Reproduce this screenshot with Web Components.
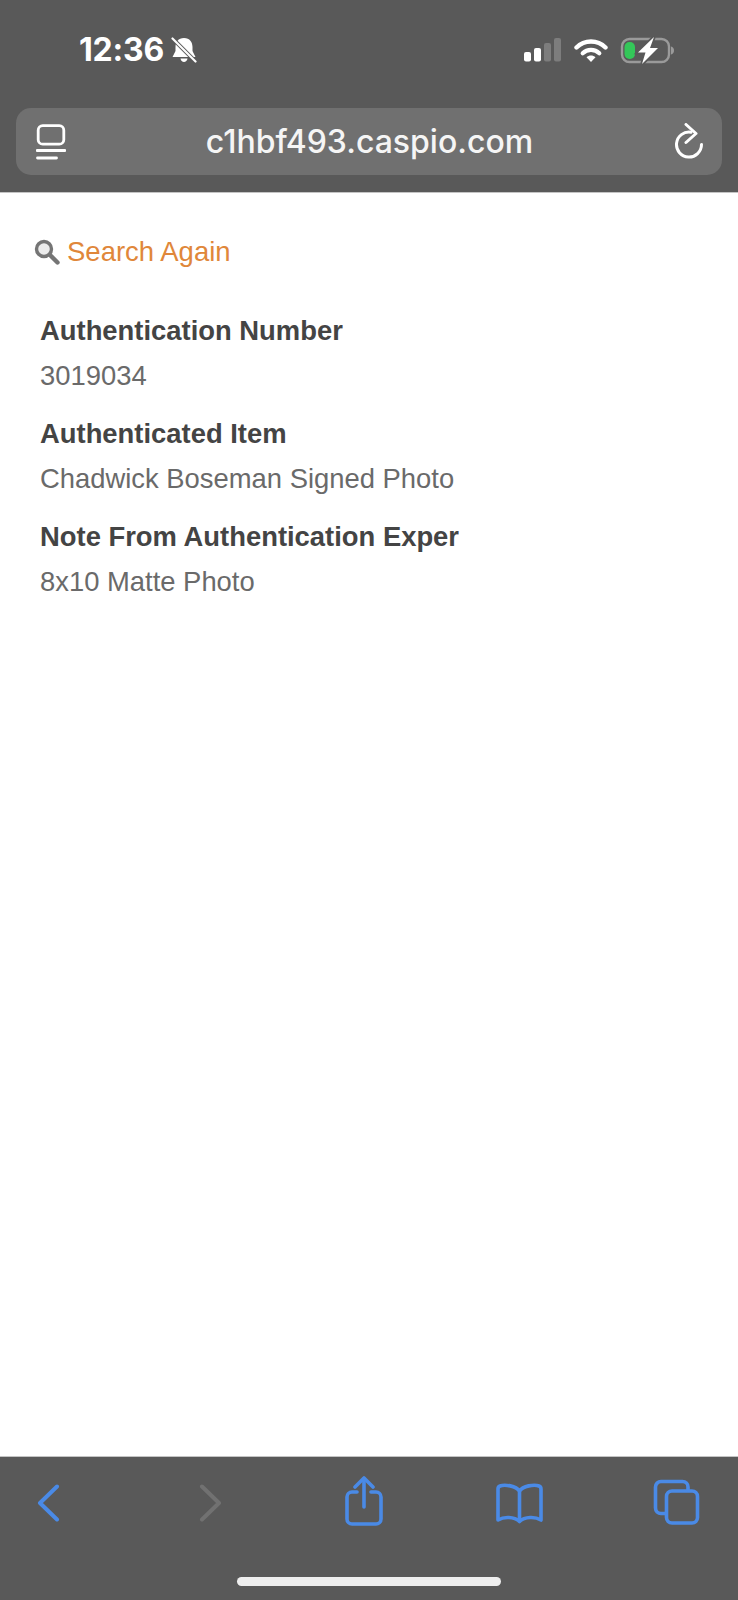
<!DOCTYPE html>
<html lang="en">
<head>
<meta charset="utf-8">
<title>c1hbf493.caspio.com</title>
<style>
    html, body { margin: 0; padding: 0; background: #fff; }
    body { width: 738px; height: 1600px; display: flex; flex-direction: column; overflow: hidden; }
    result-page { flex: 1; }
</style>
</head>
<body>
<safari-header url="c1hbf493.caspio.com" time="12:36"></safari-header>
<result-page>
    <search-link>Search Again</search-link>
    <result-field label="Authentication Number">3019034</result-field>
    <result-field label="Authenticated Item">Chadwick Boseman Signed Photo</result-field>
    <result-field label="Note From Authentication Exper">8x10 Matte Photo</result-field>
</result-page>
<safari-toolbar></safari-toolbar>

<script>
class SafariHeader extends HTMLElement {
    constructor() {
        super();
        this.attachShadow({ mode: 'open' });
    }

    connectedCallback() {
        this.shadowRoot.innerHTML = `
            <style>
                :host {
                    display: block;
                    height: 192px;
                    background: #595959;
                    border-bottom: 1px solid #c4c4c4;
                    color: #fff;
                    font-family: Inter, "Liberation Sans", sans-serif;
                }

                .status {
                    height: 108px;
                    display: flex;
                    align-items: flex-start;
                    padding-top: 36px;
                    box-sizing: border-box;
                    padding-left: 79px;
                }

                .time {
                    font-size: 32px;
                    font-weight: 700;
                    line-height: 28px;
                    letter-spacing: -0.2px;
                    width: 92px;
                }

                svg { display: block; flex: none; }

                .bell { margin-top: 1px; }
                .signal { margin-left: 327px; margin-top: 2px; }
                .wifi { margin-left: 13px; margin-top: 2px; }
                .battery { margin-left: 12px; }

                .bar {
                    height: 67px;
                    margin: 0 16px;
                    background: #707070;
                    border-radius: 15px;
                    display: flex;
                    align-items: center;
                    padding: 0 19px 0 20px;
                }

                .url {
                    flex: 1;
                    text-align: center;
                    font-size: 32px;
                    font-weight: 500;
                    letter-spacing: 0;
                    color: #f5f5f5;
                }
            </style>
            <div class="status">
                <div class="time">${this.getAttribute('time')}</div>
                <svg class="bell" width="26" height="26" viewBox="0 0 26 26" fill="#fff">
                    <path d="M13 1c-5.800 0-8.500 4.200-8.500 9v4L1.500 20h23l-3-6v-4c0-4.800-2.700-9-8.500-9z"/>
                    <path d="M9.500 21.500h7c-.3 2-1.800 3.500-3.500 3.500s-3.200-1.500-3.500-3.500z"/>
                    <path d="M1 1l24 24" stroke="#595959" stroke-width="4"/>
                    <path d="M1.500 1.500l23 23" stroke="#fff" stroke-width="2.200" stroke-linecap="round"/>
                </svg>
                <svg class="signal" width="37" height="24" viewBox="0 0 37 24">
                    <rect x="0" y="14" width="7" height="9.500" rx="2" fill="#fff"/>
                    <rect x="10" y="10" width="7" height="13.500" rx="2" fill="#fff"/>
                    <rect x="20" y="5" width="7" height="18.500" rx="2" fill="#7d7d7d"/>
                    <rect x="30" y="0" width="7" height="23.500" rx="2" fill="#7d7d7d"/>
                </svg>
                <svg class="wifi" width="34" height="24" viewBox="0 0 34 24" fill="none" stroke="#fff">
                    <path d="M2.500 9.500C10.500 1.500 23.500 1.500 31.500 9.500" stroke-width="4.400" stroke-linecap="round"/>
                    <path d="M8.700 15.200C13.200 10.800 20.800 10.800 25.300 15.200" stroke-width="4.200" stroke-linecap="round"/>
                    <path d="M12.500 19.200C15 17 19 17 21.500 19.200L17 24z" fill="#fff" stroke="none"/>
                </svg>
                <svg class="battery" width="56" height="28" viewBox="0 0 56 28" fill="none">
                    <rect x="2" y="3" width="47" height="23" rx="7.500" stroke="#9a9a9a" stroke-width="2.400"/>
                    <path d="M51 10.500c2 .5 3 2 3 4s-1 3.500-3 4z" fill="#9a9a9a"/>
                    <rect x="4.500" y="6" width="10.500" height="17" rx="5" fill="#34c759"/>
                    <path d="M34 1L18 16.500h7.500L22 28l16-16h-8z" fill="#595959" stroke="#595959" stroke-width="3.500"/>
                    <path d="M34 1L18 16.500h7.500L22 28l16-16h-8z" fill="#fff"/>
                </svg>
            </div>
            <div class="bar">
                <svg width="30" height="36" viewBox="0 0 30 36" fill="none" stroke="#fff">
                    <rect x="2.200" y="1.700" width="25.600" height="18.500" rx="4.500" stroke-width="2.800"/>
                    <path d="M1 26.500h28" stroke-width="2.800" stroke-linecap="round"/>
                    <path d="M1.500 34h19" stroke-width="2.800" stroke-linecap="round"/>
                </svg>
                <div class="url">${this.getAttribute('url')}</div>
                <svg width="30" height="38" viewBox="0 0 30 38" fill="none" stroke="#fff" stroke-width="3" stroke-linecap="round" stroke-linejoin="round">
                    <path d="M18 9.200A12.500 12.500 0 1 0 28.500 21.500"/>
                    <path d="M13 1.500L23 10.500l-10 9"/>
                </svg>
            </div>
        `;
    }
}

class ResultPage extends HTMLElement {
    constructor() {
        super();
        this.attachShadow({ mode: 'open' });
        this.shadowRoot.innerHTML = `
            <style>
                :host {
                    display: block;
                    background: #fff;
                    padding: 46px 0 0 34px;
                    font-family: "Liberation Sans", Arial, sans-serif;
                }
            </style>
            <slot></slot>
        `;
    }
}

class SearchLink extends HTMLElement {
    constructor() {
        super();
        this.attachShadow({ mode: 'open' });
        this.shadowRoot.innerHTML = `
            <style>
                :host {
                    display: flex;
                    align-items: center;
                    height: 26px;
                    margin-bottom: 43px;
                    color: #e0873a;
                    font-size: 27.500px;
                }

                svg { margin-right: 7px; flex: none; }
            </style>
            <svg width="26" height="26" viewBox="0 0 26 26" fill="none" stroke="#757575" stroke-linecap="round">
                <circle cx="10" cy="10" r="7.500" stroke-width="3.400" fill="#ececec"/>
                <path d="M16.500 16.500l7 7" stroke-width="4.400"/>
            </svg>
            <slot></slot>
        `;
    }
}

class ResultField extends HTMLElement {
    constructor() {
        super();
        this.attachShadow({ mode: 'open' });
    }

    connectedCallback() {
        this.shadowRoot.innerHTML = `
            <style>
                :host {
                    display: block;
                    padding-left: 6px;
                    margin-bottom: 13px;
                    font-size: 27.400px;
                    line-height: 45px;
                    color: #6a6a6a;
                }

                .label {
                    font-weight: 700;
                    color: #444;
                }
            </style>
            <div class="label">${this.getAttribute('label')}</div>
            <div><slot></slot></div>
        `;
    }
}

class SafariToolbar extends HTMLElement {
    constructor() {
        super();
        this.attachShadow({ mode: 'open' });
        this.shadowRoot.innerHTML = `
            <style>
                :host {
                    display: block;
                    height: 144px;
                    box-sizing: border-box;
                    background: #595959;
                    border-top: 1px solid #c4c4c4;
                }

                .icons {
                    display: flex;
                    align-items: flex-start;
                    height: 120px;
                    padding-top: 18px;
                    box-sizing: border-box;
                }

                svg { display: block; flex: none; }
                .back { margin: 9px 0 0 37px; }
                .forward { margin: 9px 0 0 137px; }
                .share { margin: 1px 0 0 122px; }
                .book { margin: 8px 0 0 111px; }
                .tabs { margin: 4px 0 0 109px; }

                .home {
                    width: 264px;
                    height: 9px;
                    margin: 0 auto;
                    border-radius: 5px;
                    background: #eee;
                }
            </style>
            <div class="icons">
                <svg class="back" width="24" height="38" viewBox="0 0 24 38" fill="none" stroke="#4a8ae6" stroke-width="4" stroke-linecap="round" stroke-linejoin="round">
                    <path d="M20 2.500L3 19l17 16.500"/>
                </svg>
                <svg class="forward" width="24" height="38" viewBox="0 0 24 38" fill="none" stroke="#717171" stroke-width="4" stroke-linecap="round" stroke-linejoin="round">
                    <path d="M4 2.500L21 19 4 35.500"/>
                </svg>
                <svg class="share" width="40" height="50" viewBox="0 0 40 50" fill="none" stroke="#4a8ae6" stroke-width="3.600" stroke-linecap="round" stroke-linejoin="round">
                    <path d="M13 16H8a5 5 0 0 0-5 5v22a5 5 0 0 0 5 5h24a5 5 0 0 0 5-5V21a5 5 0 0 0-5-5h-5"/>
                    <path d="M20 31V3"/>
                    <path d="M11 11l9-9 9 9"/>
                </svg>
                <svg class="book" width="49" height="41" viewBox="0 0 49 41" fill="none" stroke="#4a8ae6" stroke-width="3.600" stroke-linecap="round" stroke-linejoin="round">
                    <path d="M24.500 8C21 3 10 1 5 3 3.500 3.600 3 4.500 3 6v31c6-3.500 16-3.500 21.500 1.500C30 33.500 40 33.500 46 37V6c0-1.500-.5-2.400-2-3-5-2-16 0-19.500 5z"/>
                    <path d="M24.500 8v30"/>
                </svg>
                <svg class="tabs" width="47" height="46" viewBox="0 0 47 46" fill="none" stroke="#4a8ae6" stroke-width="3.600" stroke-linecap="round" stroke-linejoin="round">
                    <rect x="13.500" y="12" width="31" height="32" rx="5.500"/>
                    <path d="M35 11V8a5.500 5.500 0 0 0-5.500-5.500H8A5.500 5.500 0 0 0 2.500 8v21A5.500 5.500 0 0 0 8 34.500h5"/>
                </svg>
            </div>
            <div class="home"></div>
        `;
    }
}

customElements.define('safari-header', SafariHeader);
customElements.define('result-page', ResultPage);
customElements.define('search-link', SearchLink);
customElements.define('result-field', ResultField);
customElements.define('safari-toolbar', SafariToolbar);
</script>
</body>
</html>
